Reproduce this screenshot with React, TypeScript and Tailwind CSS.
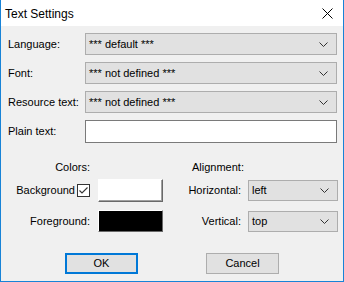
import React from 'react';

const font = { fontFamily: '"Liberation Sans", Arial, sans-serif' };

const Chevron: React.FC = () => (
  <svg width="9" height="5" viewBox="0 0 9 5" className="shrink-0">
    <path d="M0.5 0.5 L4.5 4.5 L8.5 0.5" fill="none" stroke="#333" strokeWidth="1" />
  </svg>
);

const Combo: React.FC<{ value: string; className?: string }> = ({ value, className = '' }) => (
  <div
    className={`flex items-center justify-between bg-[#e1e1e1] border border-[#adadad] pl-[3px] pr-[8px] text-[11px] text-black ${className}`}
  >
    <span>{value}</span>
    <Chevron />
  </div>
);

const App: React.FC = () => {
  return (
    <div
      className="w-[344px] h-[282px] bg-[#f0f0f0] border-x border-b border-[#1883d7] flex flex-col text-[11px] text-black"
      style={font}
    >
      <div className="h-[26px] bg-white flex items-center justify-between pl-[4px] pr-[10px] shrink-0">
        <span className="text-[12px] pt-[1px]">Text Settings</span>
        <svg width="11" height="11" viewBox="0 0 11 11">
          <path d="M0.5 0.5 L10.5 10.5 M10.5 0.5 L0.5 10.5" stroke="#000" strokeWidth="1" />
        </svg>
      </div>

      <div className="flex flex-col pl-[7px] pt-[7px]">
        <div className="grid grid-cols-[77px_252px] gap-y-[7px] items-center">
          <span>Language:</span>
          <Combo value="*** default ***" className="h-[22px]" />
          <span>Font:</span>
          <Combo value="*** not defined ***" className="h-[22px]" />
          <span>Resource text:</span>
          <Combo value="*** not defined ***" className="h-[22px]" />
          <span>Plain text:</span>
          <div className="h-[23px] bg-white border border-[#7a7a7a]" />
        </div>

        <div className="flex mt-[18px]">
          <div className="grid grid-cols-[82px_65px] gap-x-[8px] grid-rows-[18px_31px_23px] items-start">
            <span className="text-right leading-[13px]">Colors:</span>
            <span />
            <div className="h-[23px] flex items-center justify-end gap-[2px]">
              <span>Background</span>
              <div className="w-[13px] h-[13px] border border-[#333] bg-white flex items-center justify-center">
                <svg width="9" height="7" viewBox="0 0 9 7">
                  <path d="M0.5 3.5 L3 6 L8.5 0.5" fill="none" stroke="#333" strokeWidth="1.1" />
                </svg>
              </div>
            </div>
            <div className="h-[23px] bg-white border border-t-white border-l-white border-r-[#696969] border-b-[#696969] shadow-[inset_-1px_-1px_0_#a0a0a0]" />
            <span className="h-[22px] flex items-center justify-end">Foreground:</span>
            <div className="h-[22px] bg-black border border-t-white border-l-white border-r-[#696969] border-b-[#696969]" />
          </div>

          <div className="ml-[29px] grid grid-cols-[49px_90px] gap-x-[7px] grid-rows-[18px_31px_23px] items-start">
            <span className="col-span-2 leading-[13px]">Alignment:</span>
            <span className="h-[23px] flex items-center justify-end whitespace-nowrap">Horizontal:</span>
            <Combo value="left" className="h-[21px] mt-[1px]" />
            <span className="h-[22px] flex items-center justify-end">Vertical:</span>
            <Combo value="top" className="h-[21px] mt-[1px]" />
          </div>
        </div>

        <div className="flex mt-[20px] pl-[57px] gap-[68px]">
          <button className="w-[73px] h-[21px] bg-[#e1e1e1] border-2 border-[#0078d7] text-[11px] flex items-center justify-center">
            OK
          </button>
          <button className="w-[73px] h-[21px] bg-[#e1e1e1] border border-[#adadad] text-[11px] flex items-center justify-center">
            Cancel
          </button>
        </div>
      </div>
    </div>
  );
};

export default App;
